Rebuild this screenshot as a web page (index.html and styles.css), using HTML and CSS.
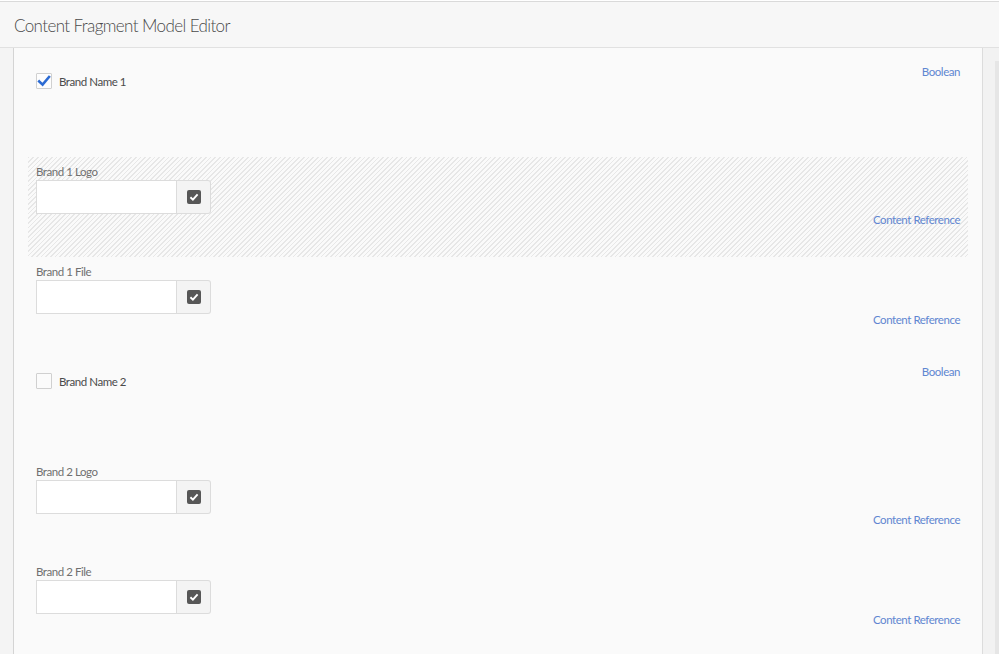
FILE: index.html
```html
<!DOCTYPE html>
<html lang="en">
<head>
<meta charset="utf-8">
<title>Content Fragment Model Editor</title>
<link rel="stylesheet" href="styles.css">
</head>
<body>
<div class="topline"></div>
<header class="header">
  <h1 class="title">Content Fragment Model Editor</h1>
</header>
<div class="main">
  <div class="gutter"></div>
  <section class="panel">
    <div class="item item-bool">
      <label class="check">
        <span class="box box-on">
          <svg viewBox="0 0 16 16" width="16" height="16"><path d="M3.2 8.4 L6.6 11.6 L13 4" fill="none" stroke="#2c6bd3" stroke-width="2.6" stroke-linecap="square"/></svg>
        </span>
        <span class="check-text">Brand Name 1</span>
      </label>
      <span class="type">Boolean</span>
    </div>

    <div class="item item-ref item-active">
      <span class="field-label">Brand 1 Logo</span>
      <div class="picker">
        <span class="picker-input"></span>
        <span class="picker-btn">
          <svg viewBox="0 0 14 14" width="14" height="14"><rect x="0" y="0" width="14" height="14" rx="2" fill="#575757"/><path d="M3.4 7.3 L5.9 9.6 L10.6 4.4" fill="none" stroke="#fff" stroke-width="1.9"/></svg>
        </span>
      </div>
      <span class="type">Content Reference</span>
    </div>

    <div class="item item-ref">
      <span class="field-label">Brand 1 File</span>
      <div class="picker">
        <span class="picker-input"></span>
        <span class="picker-btn">
          <svg viewBox="0 0 14 14" width="14" height="14"><rect x="0" y="0" width="14" height="14" rx="2" fill="#575757"/><path d="M3.4 7.3 L5.9 9.6 L10.6 4.4" fill="none" stroke="#fff" stroke-width="1.9"/></svg>
        </span>
      </div>
      <span class="type">Content Reference</span>
    </div>

    <div class="item item-bool">
      <label class="check">
        <span class="box"></span>
        <span class="check-text">Brand Name 2</span>
      </label>
      <span class="type">Boolean</span>
    </div>

    <div class="item item-ref">
      <span class="field-label">Brand 2 Logo</span>
      <div class="picker">
        <span class="picker-input"></span>
        <span class="picker-btn">
          <svg viewBox="0 0 14 14" width="14" height="14"><rect x="0" y="0" width="14" height="14" rx="2" fill="#575757"/><path d="M3.4 7.3 L5.9 9.6 L10.6 4.4" fill="none" stroke="#fff" stroke-width="1.9"/></svg>
        </span>
      </div>
      <span class="type">Content Reference</span>
    </div>

    <div class="item item-ref">
      <span class="field-label">Brand 2 File</span>
      <div class="picker">
        <span class="picker-input"></span>
        <span class="picker-btn">
          <svg viewBox="0 0 14 14" width="14" height="14"><rect x="0" y="0" width="14" height="14" rx="2" fill="#575757"/><path d="M3.4 7.3 L5.9 9.6 L10.6 4.4" fill="none" stroke="#fff" stroke-width="1.9"/></svg>
        </span>
      </div>
      <span class="type">Content Reference</span>
    </div>
  </section>
  <aside class="scroll">
    <div class="scroll-track"></div>
  </aside>
</div>
</body>
</html>
```
FILE: styles.css
```css
html, body {
  margin: 0;
  padding: 0;
  height: 100%;
  overflow: hidden;
}
body {
  background: #f4f4f4;
  font-family: Lato, "Open Sans", sans-serif;
  color: #4b4b4b;
}
.topline {
  height: 1px;
  background: #ffffff;
}
.header {
  height: 45px;
  border-top: 1px solid #dadada;
  border-bottom: 1px solid #e1e1e1;
  background: #f7f7f7;
  display: flex;
  align-items: center;
  padding-left: 14px;
}
.title {
  margin: 0;
  font-size: 17px;
  font-weight: 300;
  color: #4a4a4a;
  letter-spacing: -0.6px;
  position: relative;
  top: 1px;
}
.main {
  display: flex;
  height: 620px;
}
.gutter {
  width: 13px;
  background: #f4f4f4;
}
.panel {
  width: 940px;
  background: #fafafa;
  border-left: 1px solid #d4d4d4;
  border-right: 1px solid #dcdcdc;
  padding: 9px 14px 0 14px;
  display: flex;
  flex-direction: column;
}
.scroll {
  width: 16px;
  background: #f2f2f2;
  display: flex;
  justify-content: flex-end;
}
.scroll-track {
  width: 4px;
  margin-top: 13px;
  background: #e6e6e6;
}
.item {
  height: 100px;
  box-sizing: border-box;
  padding: 8px 8px 0 8px;
}
.item-bool {
  display: flex;
  justify-content: space-between;
  align-items: flex-start;
}
.item-ref {
  display: flex;
  flex-direction: column;
  align-items: flex-start;
}
.item-active {
  background: repeating-linear-gradient(135deg, #e7e7e7 0 1.3px, #fafafa 1.3px 3.3px);
}
.type {
  font-size: 11.5px;
  line-height: 14px;
  letter-spacing: -0.45px;
  color: #5f86d1;
}
.item-ref .type {
  align-self: flex-end;
  line-height: 12px;
}
.check {
  display: flex;
  align-items: center;
  margin-top: 8px;
  gap: 7px;
}
.box {
  width: 14px;
  height: 14px;
  border: 1px solid #d0d0d0;
  background: #fbfbfb;
  display: flex;
  border-radius: 1px;
}
.box svg {
  margin: -1px;
}
.box-on {
  background: #fdfdfd;
}
.check-text {
  font-size: 11.5px;
  letter-spacing: -0.45px;
  color: #4b4b4b;
}
.field-label {
  font-size: 11.5px;
  line-height: 14px;
  letter-spacing: -0.45px;
  color: #707070;
  margin-bottom: 1px;
}
.picker {
  display: flex;
  height: 34px;
}
.picker-input {
  width: 139px;
  border: 1px solid #dcdcdc;
  background: #ffffff;
}
.picker-btn {
  width: 33px;
  border: 1px solid #dcdcdc;
  border-left: none;
  border-radius: 0 3px 3px 0;
  background: #f4f4f4;
  display: flex;
  align-items: center;
  justify-content: center;
}
```
